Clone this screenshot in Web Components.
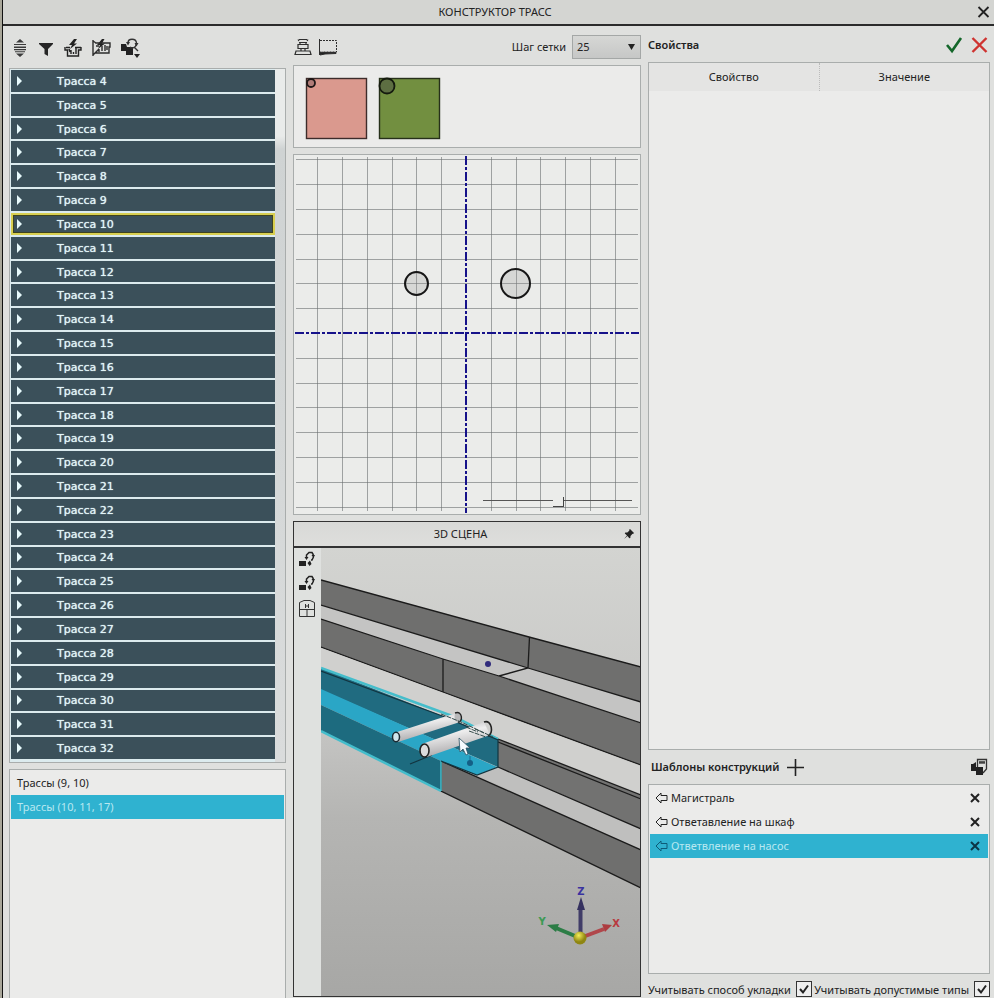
<!DOCTYPE html>
<html lang="ru">
<head>
<meta charset="utf-8">
<title>Конструктор трасс</title>
<style>
  body {
    margin: 0;
    background: #a9a79a;
    font-family: "Noto Sans", "Open Sans", sans-serif;
    font-size: 11px;
    line-height: 16px;
    color: #222;
  }
</style>
</head>
<body>
<route-designer></route-designer>

<template id="icon-button">
  <style>
    :host { display: inline-flex; }
    button {
      display: flex;
      padding: 0;
      border: 0;
      background: none;
      color: inherit;
      cursor: pointer;
    }
  </style>
  <button type="button"><slot></slot></button>
</template>

<template id="route-row">
  <style>
    :host { display: flex; min-height: 0; }
    button {
      flex: 1;
      display: flex;
      align-items: center;
      padding: 0 6px;
      border: 0;
      background: #3b505a;
      color: #e2f5f8;
      font: 11px/16px "DejaVu Sans", sans-serif;
      text-align: left;
      text-shadow: 0 0 1px #e2f5f8;
    }
    :host([selected]) button {
      border: 2px solid #d8cf50;
      padding: 0 4px;
      outline: 1px solid #3f4420;
      outline-offset: -3px;
    }
    span { padding-top: 2px; }
    svg { width: 6px; height: 10px; margin-right: 34px; fill: #e8fafc; }
    :host([leaf]) svg { visibility: hidden; }
  </style>
  <button type="button">
    <svg viewBox="0 0 6 10"><path d="M0 0L5 5L0 10Z"/></svg>
    <span><slot></slot></span>
  </button>
</template>

<template id="route-list">
  <style>
    :host {
      display: flex;
      min-height: 0;
      border: 1px solid #a9adac;
      background: #e0e3e2;
    }
    .rows {
      flex: 1;
      display: flex;
      flex-direction: column;
      gap: 2px;
      padding: 1px 0 3px 1px;
      background: #dcebee;
    }
    .rows route-row { flex: 1; }
    .bar { width: 10px; background: linear-gradient(#e9ebea 0 67px, #cfd3d3 80px, #dadcdc); }
  </style>
  <div class="rows"></div>
  <div class="bar"></div>
</template>

<template id="section-item">
  <style>
    :host {
      display: flex;
      align-items: center;
      height: 24px;
      padding: 0 6px;
      background: #ebebea;
    }
    :host([selected]) { background: #2fb2d0; color: #b8e8f1; }
    span { flex: 1; }
    svg { width: 13px; height: 12px; margin-right: 3px; fill: none; stroke: #222; }
    :host([selected]) svg { stroke: #0d5c78; }
    :host(:not([removable])) svg,
    :host(:not([removable])) icon-button { display: none; }
    icon-button { color: #111; }
    icon-button svg { width: 10px; height: 10px; margin-right: 2px; stroke-width: 2; }
    :host([selected]) icon-button svg { stroke: #0c3545; }
  </style>
  <svg viewBox="0 0 13 12"><path d="M1 6L6 1V3.500H12V8.500H6V11Z"/></svg>
  <span><slot></slot></span>
  <icon-button label="Удалить"><svg viewBox="0 0 10 10"><path d="M1 1L9 9M9 1L1 9"/></svg></icon-button>
</template>

<template id="check-option">
  <style>
    :host { display: flex; align-items: center; gap: 5px; white-space: nowrap; }
    label { padding-top: 2px; }
    input {
      appearance: none;
      width: 16px;
      height: 16px;
      margin: 0;
      border: 1px solid #333;
      background: #eee;
    }
    input:checked {
      background: #eee url("data:image/svg+xml,%3Csvg xmlns='http://www.w3.org/2000/svg' viewBox='0 0 14 14'%3E%3Cpath d='M3 7L6 10.500L11 3.500' fill='none' stroke='%23222' stroke-width='2'/%3E%3C/svg%3E");
    }
  </style>
  <label for="box"><slot></slot></label>
  <input type="checkbox" id="box" checked>
</template>

<template id="section-grid">
  <style>
    :host {
      display: block;
      position: relative;
      min-height: 0;
      border: 1px solid #a9adac;
      background: #ebecea;
    }
    svg { display: block; width: 100%; height: 100%; }
    .lines { stroke: #6b6f6f; stroke-opacity: .6; }
    .axis { stroke: #16128a; stroke-width: 2; stroke-dasharray: 9 2 3 2; }
    .pipe { fill: #999; fill-opacity: .25; stroke: #161616; stroke-width: 2; }
    /* zoom slider floats over the canvas */
    input {
      position: absolute;
      right: 8px;
      bottom: 6px;
      width: 43%;
      height: 14px;
      margin: 0;
      appearance: none;
      background: linear-gradient(#555, #555) 0 6px / 100% 1px no-repeat;
    }
    input::-webkit-slider-thumb {
      appearance: none;
      width: 11px;
      height: 10px;
      margin-top: 2px;
      border: solid #444;
      border-width: 0 1px 1px 0;
      background: #ebecea;
    }
  </style>
  <svg viewBox="0 0 346 359" preserveAspectRatio="xMidYMid slice">
    <g class="lines"></g>
    <path class="axis" d="M1 178H345M172 1V358"/>
    <circle class="pipe" cx="122.500" cy="128.500" r="11.500"/>
    <circle class="pipe" cx="221.500" cy="128.500" r="14.500"/>
  </svg>
  <input type="range" aria-label="Масштаб" value="51">
</template>

<template id="scene-view">
  <style>
    :host {
      display: flex;
      flex-direction: column;
      min-height: 0;
      border: 1px solid #333;
      background: #dfe1df;
    }
    header {
      display: flex;
      align-items: center;
      height: 24px;
      padding-right: 5px;
      border-bottom: 2px solid #333;
      background: linear-gradient(#d8d9d7, #dededc);
    }
    h2 { flex: 1; margin: 0; padding-left: 4px; font-size: 11px; font-weight: 400; text-align: center; }
    .body { flex: 1; display: flex; min-height: 0; }
    nav { display: flex; flex-direction: column; gap: 8px; width: 22px; padding: 3px 0 0 5px; }
    .canvas { flex: 1; min-width: 0; }
    .canvas > svg { display: block; width: 100%; height: 100%; }
    text { font: bold 10px "DejaVu Sans", sans-serif; text-anchor: middle; }
  </style>
  <header>
    <h2>3D СЦЕНА</h2>
    <icon-button label="Закрепить">
      <svg width="12" height="12" viewBox="0 0 12 12" fill="#222"><path d="M7 1L11 5L10 6L9.500 5.700L7.500 8L7.300 10L6.300 10.300L4.500 8L1 11L4 7.500L1.800 5.500L2.300 4.500L4.300 4.500L6.500 2.500L6 2Z"/></svg>
    </icon-button>
  </header>
  <div class="body">
    <nav>
      <icon-button label="Повернуть влево">
        <svg width="17" height="16" viewBox="0 0 17 16"><path d="M0 10H7V15H0Z" fill="#222"/><path d="M7.500 7V4L10 1.500H13L14.500 4M14.500 6L13 9H12" fill="none" stroke="#222" stroke-width="1.500"/><path d="M5.500 6H9.500L7.500 9ZM12.500 4H16L14.500 7ZM8.500 12L11 9.500L12.500 13L10.500 15Z" fill="#222"/></svg>
      </icon-button>
      <icon-button label="Повернуть вправо">
        <svg width="17" height="16" viewBox="0 0 17 16"><path d="M0 10H7V15H0Z" fill="#222"/><path d="M7.500 7V4L10 1.500H13L14.500 4M14.500 6L13 9H12" fill="none" stroke="#222" stroke-width="1.500"/><path d="M5.500 6H9.500L7.500 9ZM12.500 4H16L14.500 7ZM8.500 12L11 9.500L12.500 13L10.500 15Z" fill="#222"/></svg>
      </icon-button>
      <icon-button label="Виды">
        <svg width="17" height="18" viewBox="0 0 17 18" fill="none" stroke="#333"><path d="M.500 3.500L5 1.500H11L15.500 3.500V17.500H.500ZM.500 10.500H15.500M8 10.500V17.500M6.500 5V9M9.500 5V9M6.500 7H9.500"/></svg>
      </icon-button>
    </nav>
    <div class="canvas">
      <svg viewBox="321 547 319 450" preserveAspectRatio="xMidYMid slice">
        <defs>
          <linearGradient id="sky" x1="0" y1="0" x2="0" y2="1">
            <stop offset="0" stop-color="#d3d4d1"/>
            <stop offset=".35" stop-color="#c9c9c7"/>
            <stop offset=".6" stop-color="#b5b5b3"/>
            <stop offset="1" stop-color="#a7a7a5"/>
          </linearGradient>
          <linearGradient id="tube" x1="0" y1="0" x2=".3" y2="1">
            <stop offset="0" stop-color="#aaa8ad"/>
            <stop offset=".4" stop-color="#eee"/>
            <stop offset="1" stop-color="#a9a7a9"/>
          </linearGradient>
          <radialGradient id="ball" cx=".4" cy=".3">
            <stop offset="0" stop-color="#f4ef5a"/>
            <stop offset="1" stop-color="#8f8612"/>
          </radialGradient>
        </defs>
        <rect x="320" y="546" width="322" height="453" fill="url(#sky)"/>

        <!-- upper tray -->
        <path d="M321 605L528 668L641 702V723L499 676L321 619Z" fill="#c4c4c3"/>
        <path d="M321 580L529 637L641 667V702L528 668L321 605Z" fill="#6f6f6e"/>
        <path d="M321 619L443 659L499 676L641 723V765L443 692L321 647Z" fill="#6f6f6e"/>
        <path d="M321 580L529 637L641 667M321 605L528 668L641 702M529.500 637L528 668L499 676M321 619L443 659L499 676L641 723M321 647L443 692L641 765M443 659V692" fill="none" stroke="#1b1b1b" stroke-width="1.300"/>
        <circle cx="488" cy="664" r="3" fill="#302b7c"/>

        <!-- light ground between the trays -->
        <path d="M321 648L443 693L641 766V794L498 738L321 668Z" fill="#d0d0ce"/>

        <!-- lower tray, plain part -->
        <path d="M498 739L641 795V829L498 767Z" fill="#727271"/>
        <path d="M498 767L641 829V850L477 775Z" fill="#bfbfbe"/>
        <path d="M441 761L641 850V888L441 791Z" fill="#6f6f6e"/>
        <path d="M498 739L641 795M498 742L641 799M498 767L641 829M441 761L641 850M441 761V791L641 888" fill="none" stroke="#1b1b1b" stroke-width="1.300"/>

        <!-- lower tray, highlighted part -->
        <path d="M321 668L498 738V767L321 690Z" fill="#206b80"/>
        <path d="M321 689L497 767L477 775L441 761L321 705Z" fill="#2aa6c6"/>
        <path d="M321 705L441 761V791L321 731Z" fill="#1d6b7f"/>
        <path d="M321 668L455 717L498 739M321 731L441 791" fill="none" stroke="#45bdcb" stroke-width="2.500"/>
        <path d="M441 761V791" stroke="#45bdcb" stroke-width="1.500"/>
        <path d="M321 671L445 717L498 740V767L477 775L441 761M410 764L432 755" fill="none" stroke="#123540" stroke-width="1.200"/>
        <path d="M470 756V763" stroke="#176b92"/>
        <circle cx="470" cy="763" r="3" fill="#145f86"/>

        <!-- pipes -->
        <path d="M394 733L456 713L460 722L398 742Z" fill="url(#tube)"/>
        <ellipse cx="458" cy="717" rx="3.500" ry="5" fill="#b9b9ba"/>
        <path d="M455 713C463 710 463 723 458 722" fill="none" stroke="#222" stroke-width="1.400"/>
        <ellipse cx="396" cy="737" rx="3.500" ry="4.800" fill="#cfe6ec" stroke="#1a2b33" stroke-width="1.500"/>
        <path d="M422 744L484 722L490 735L427 757Z" fill="url(#tube)"/>
        <path d="M484 722C492 719 494 734 488 736" fill="none" stroke="#222" stroke-width="1.600"/>
        <ellipse cx="424.500" cy="750.500" rx="4.500" ry="6.500" fill="#dcdcdc" stroke="#222" stroke-width="1.600"/>
        <path d="M441 714L461 722L493 737M466 727L478 732M469 731L486 737M475 729L484 733" stroke="#364c4c" stroke-dasharray="5 1" fill="none"/>
        <path d="M459 738L460 752L463 749L466 755L468 754L466 748H470Z" fill="#f4fbff" stroke="#2d5262" stroke-width=".800"/>

        <!-- axes -->
        <path d="M580 938L556 928" stroke="#2c7d46" stroke-width="4"/>
        <path d="M547 925L559 924L556 932Z" fill="#2c7d46"/>
        <path d="M580 938L604 929" stroke="#b0474b" stroke-width="4"/>
        <path d="M612 925L602 924L605 932Z" fill="#ad3c40"/>
        <path d="M580.500 938V908" stroke="#413d68" stroke-width="4"/>
        <path d="M581 897L585 910H577Z" fill="#35315f"/>
        <circle cx="580" cy="938" r="6.500" fill="url(#ball)"/>
        <text x="581" y="895" fill="#3a32a0">Z</text>
        <text x="542" y="925" fill="#3d9a55">Y</text>
        <text x="616" y="927" fill="#b83a3f">X</text>
      </svg>
    </div>
  </div>
</template>

<template id="route-designer">
  <style>
    :host {
      display: flex;
      flex-direction: column;
      box-sizing: border-box;
      height: 100vh;
      margin-left: 2px;
      overflow: hidden;
      border-left: 1px solid #111;
      background: #dfe0de;
    }
    .title {
      display: flex;
      align-items: center;
      height: 24px;
      padding: 0 4px 0 10px;
      border-bottom: 2px solid #2b2b2b;
      background: #d4d5d2;
    }
    h1 { flex: 1; margin: 0; font-size: 11px; font-weight: 400; text-align: center; }
    h2 { margin: 0; font-size: 11px; font-weight: 600; }
    main {
      flex: 1;
      display: grid;
      grid-template-columns: minmax(0, 277fr) minmax(0, 348fr) minmax(0, 342fr);
      gap: 7px;
      min-height: 0;
      padding: 0 4px 0 6px;
    }
    .column { display: grid; min-height: 0; }
    .left { grid-template-rows: 42px minmax(0, 1fr) 229px; }
    .middle { grid-template-rows: 39px 83px 367px minmax(0, 1fr); }
    .right { grid-template-rows: 36px minmax(0, 1fr) 34px 190px 24px; }
    .left route-list { margin-bottom: 6px; }
    .middle section-grid { margin-top: 6px; }
    .middle scene-view { margin: 6px 0 1px; }
    .tools { display: flex; align-items: center; }
    .left .tools { gap: 10px; padding: 2px 0 0 4px; }
    .middle .tools { gap: 6px; padding: 2px 0 0 1px; }
    .middle .tools label { margin-left: auto; }
    select {
      appearance: none;
      width: 69px;
      height: 24px;
      padding: 0 4px;
      border: 1px solid #a4a7a6;
      border-radius: 0;
      background: url("data:image/svg+xml,%3Csvg xmlns='http://www.w3.org/2000/svg' viewBox='0 0 7 6'%3E%3Cpath d='M0 0H7L3.500 6Z' fill='%23222'/%3E%3C/svg%3E") right 5px center / 7px 6px no-repeat, linear-gradient(#d6d7d5, #c6c7c6);
      color: inherit;
      font: inherit;
    }
    .panel {
      min-height: 0;
      border: 1px solid #a9adac;
      background: #ebebea;
    }
    .swatches { display: flex; align-items: center; gap: 10px; padding: 4px 0 0 11px; }
    .head { display: flex; align-items: center; gap: 8px; padding: 2px 2px 0 0; }
    .head h2 { margin-right: auto; }
    .templates { padding-top: 0; }
    .templates h2 { margin: 0 0 0 3px; }
    .templates icon-button:last-child { margin-left: auto; }
    table { width: 100%; border-collapse: collapse; table-layout: fixed; }
    th { height: 28px; padding: 0; background: #e4e4e3; font-weight: 400; }
    th + th { border-left: 1px dotted #bbb; }
    .list { padding: 1px; }
    .left .list { border-bottom: 0; }
    .right .list section-item { padding: 0 6px 0 5px; }
    .checks { display: flex; align-items: end; justify-content: space-between; }
  </style>
  <div class="title">
    <h1>КОНСТРУКТОР ТРАСС</h1>
    <icon-button label="Закрыть"><svg width="13" height="12" viewBox="0 0 13 12" fill="none" stroke="#222" stroke-width="1.800"><path d="M1.500 1L11.500 11M11.500 1L1.500 11"/></svg></icon-button>
  </div>
  <main>
    <div class="column left">
      <div class="tools">
        <icon-button label="Развернуть"><svg width="14" height="18" viewBox="0 0 14 18" fill="#3a3a3a"><path d="M3 3.500L7 0L11 3.500ZM3 14.500H11L7 18ZM1 5H13V6H1ZM1 7.500H13V9H1ZM1 10H13V11.200H1ZM2 12.200H12V13.200H2Z"/></svg></icon-button>
        <icon-button label="Фильтр"><svg width="17" height="18" viewBox="0 0 17 18" fill="#262626"><path d="M2 4H16V5L11 10V17L7.500 15V10L2 5Z"/></svg></icon-button>
        <icon-button label="Автотрассировка"><svg width="18" height="18" viewBox="0 0 18 18"><path d="M10 0L5 6H8L6 10L13 4.500H10L13 0Z" fill="#222"/><path d="M2 8.500H6M11 8.500H17M1 8V11H3.500V17H14.500V11H17V8M7 11V15M9.500 13V15M12 9V15M5 10L6 13" fill="none" stroke="#222" stroke-width="1.400"/></svg></icon-button>
        <icon-button label="Обновить трассы"><svg width="19" height="18" viewBox="0 0 19 18"><path d="M10 0L5 6H8L6 10L13 4.500H10L12.500 0Z" fill="#222"/><path d="M1 1V17M1 2L4 4M3 4H18V8H17V14L3 14M3 14L7 10M7 10V13M10 7V12M13 6V12M15 7V11M1 16L5 12M4 7H7" fill="none" stroke="#2c2c2c" stroke-width="1.400"/></svg></icon-button>
        <icon-button label="Обновить компоненты"><svg width="20" height="22" viewBox="2 0 20 22"><path d="M2 7H7L8 10H14V18H7V14H2ZM15 17H21L18 21Z" fill="#222"/><path d="M9 6C9 1 17 1 17.500 6C17 11 13 12 11 10M15 10L19 14" fill="none" stroke="#333" stroke-width="1.400"/><path d="M7 5H11L9 8.500ZM15.500 6H19.500L17.500 9.500Z" fill="#333"/></svg></icon-button>
      </div>
      <route-list first="4" last="32" leaf="5" current="10"></route-list>
      <div class="panel list">
        <section-item>Трассы (9, 10)</section-item>
        <section-item selected>Трассы (10, 11, 17)</section-item>
      </div>
    </div>

    <div class="column middle">
      <div class="tools">
        <icon-button label="Выровнять"><svg width="18" height="18" viewBox="0 0 18 18" fill="none" stroke="#2e2e2e" stroke-width="1.200"><path d="M5 1.500H13M5 4.500H13M4 1.500L5 3M14 1.500L13 3M4 6.500H14V10.500H4ZM6 4.500V6.500M12 4.500V6.500M7 10.500V13M11 10.500V13M2 13H16L17 16.500H1Z"/></svg></icon-button>
        <icon-button label="Сечение"><svg width="20" height="18" viewBox="0 0 20 18" fill="none" stroke="#2e2e2e"><path d="M1.500 1V17"/><path d="M2 2.500H18.500V14H4" stroke-dasharray="2 1"/><path d="M2 17V14L5 14.500H18V15.500L7 16Z" fill="#222"/></svg></icon-button>
        <label for="step">Шаг сетки</label>
        <select id="step"><option>25</option></select>
      </div>
      <div class="panel swatches">
        <svg width="63" height="63" viewBox="0 0 63 63"><rect x="1.500" y="1.500" width="60" height="60" fill="#da998e" stroke="#3d2c2b" stroke-width="1.400"/><circle cx="6" cy="6" r="4" fill="#b07c78" stroke="#1f1717" stroke-width="1.800"/></svg>
        <svg width="63" height="63" viewBox="0 0 63 63"><rect x="1.500" y="1.500" width="60" height="60" fill="#728f40" stroke="#26301a" stroke-width="1.400"/><circle cx="9" cy="9" r="7.500" fill="#5d6e42" stroke="#141a0e" stroke-width="1.800"/></svg>
      </div>
      <section-grid></section-grid>
      <scene-view></scene-view>
    </div>

    <div class="column right">
      <div class="head">
        <h2>Свойства</h2>
        <icon-button label="Применить"><svg width="18" height="18" viewBox="0 0 18 18" fill="none" stroke="#14672a" stroke-width="2.600"><path d="M2 9L7 15L16 2"/></svg></icon-button>
        <icon-button label="Отмена"><svg width="17" height="18" viewBox="0 0 17 18" fill="none" stroke="#cf3330" stroke-width="2.400"><path d="M1.500 2L15.500 16M15.500 2L1.500 16"/></svg></icon-button>
      </div>
      <div class="panel">
        <table><thead><tr><th>Свойство</th><th>Значение</th></tr></thead></table>
      </div>
      <div class="head templates">
        <h2>Шаблоны конструкций</h2>
        <icon-button label="Добавить"><svg width="17" height="17" viewBox="0 0 17 17" fill="none" stroke="#222" stroke-width="1.600"><path d="M8.500 0V17M0 8.500H17"/></svg></icon-button>
        <icon-button label="Сохранить"><svg width="18" height="18" viewBox="0 0 18 18"><path d="M1 6H3L6 4V9H13V17H6V13H1Z" fill="#222"/><path d="M7.500 9V1.500H16.500V11L13 15M9 4H15M10 4V6M12 4V6M14 4V6" fill="none" stroke="#333" stroke-width="1.300"/></svg></icon-button>
      </div>
      <div class="panel list">
        <section-item removable>Магистраль</section-item>
        <section-item removable>Ответавление на шкаф</section-item>
        <section-item removable selected>Ответвление на насос</section-item>
      </div>
      <div class="checks">
        <check-option>Учитывать способ укладки</check-option>
        <check-option>Учитывать допустимые типы</check-option>
      </div>
    </div>
  </main>
</template>

<script>
class TemplateElement extends HTMLElement {
  constructor() {
    super();
    this.attachShadow({ mode: "open" });
    const template = document.getElementById(this.localName);
    this.shadowRoot.appendChild(template.content.cloneNode(true));
  }
}

customElements.define("icon-button", class extends TemplateElement {
  connectedCallback() {
    this.shadowRoot.querySelector("button").setAttribute("aria-label", this.getAttribute("label"));
  }
});

customElements.define("route-row", class extends TemplateElement {});

customElements.define("route-list", class extends TemplateElement {
  connectedCallback() {
    const rows = this.shadowRoot.querySelector(".rows");
    const last = Number(this.getAttribute("last"));

    for (let i = Number(this.getAttribute("first")); i <= last; i++) {
      const row = document.createElement("route-row");
      row.textContent = `Трасса ${i}`;
      row.toggleAttribute("leaf", i === Number(this.getAttribute("leaf")));
      row.toggleAttribute("selected", i === Number(this.getAttribute("current")));
      row.addEventListener("click", () => {
        rows.querySelectorAll("route-row").forEach((r) => r.toggleAttribute("selected", r === row));
      });
      rows.appendChild(row);
    }
  }
});

customElements.define("section-item", class extends TemplateElement {
  connectedCallback() {
    const button = this.shadowRoot.querySelector("icon-button");
    button.addEventListener("click", () => this.remove());
  }
});

customElements.define("check-option", class extends TemplateElement {});

customElements.define("section-grid", class extends TemplateElement {
  connectedCallback() {
    const step = 24.8;
    let d = "";

    // lines go out from the axes in both directions
    for (let i = -7; i <= 7; i++) {
      if (i === 0) continue;
      const x = Math.round(172 + i * step) + 0.5;
      const y = Math.round(178 + i * step) + 0.5;
      if (Math.abs(i) < 7) d += `M${x} 2V356`;
      d += `M2 ${y}H344`;
    }

    this.shadowRoot.querySelector(".lines").innerHTML = `<path d="${d}"/>`;
  }
});

customElements.define("scene-view", class extends TemplateElement {});
customElements.define("route-designer", class extends TemplateElement {});
</script>
</body>
</html>
